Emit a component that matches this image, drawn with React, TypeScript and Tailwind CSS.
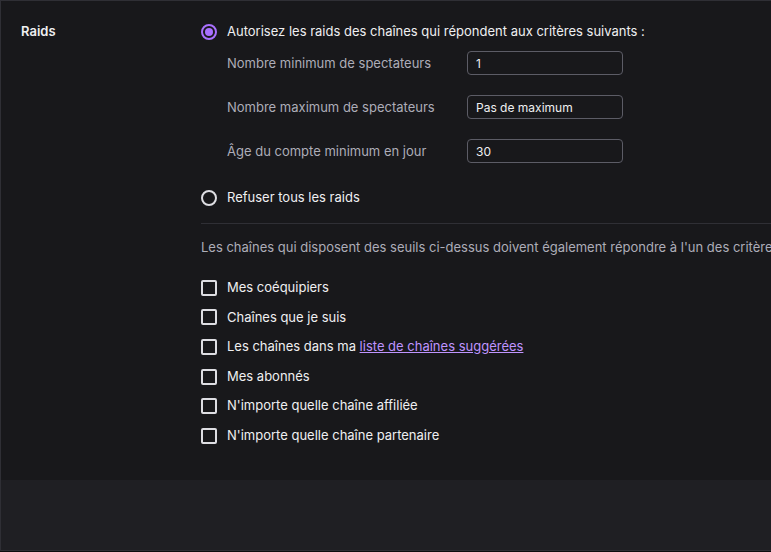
import React from "react";

const limits = [
  { label: "Nombre minimum de spectateurs", value: "1" },
  { label: "Nombre maximum de spectateurs", value: "Pas de maximum" },
  { label: "Âge du compte minimum en jour", value: "30" },
];

const Radio = ({ checked }: { checked?: boolean }) => (
  <span
    className={`flex h-4 w-4 shrink-0 items-center justify-center rounded-full border-2 ${
      checked ? "border-[#a970ff]" : "border-[#dedee3]"
    }`}
  >
    {checked && <span className="h-2 w-2 rounded-full bg-[#a970ff]" />}
  </span>
);

const Checkbox = () => (
  <span className="h-4 w-4 shrink-0 rounded-[2px] border-2 border-[#dedee3]" />
);

export default function App() {
  return (
    <div
      className="h-[552px] w-[771px] overflow-hidden bg-[#0e0e10] text-[13px] text-[#efeff1]"
      style={{ fontFamily: "Inter, 'Noto Sans', sans-serif" }}
    >
      <div className="border-b border-l border-t border-[#2f2f35] bg-[#18181b]">
        <div className="flex h-[479px] overflow-hidden">
          <div className="w-[200px] shrink-0 pl-5 pt-[22px]">
            <div className="flex h-[18px] items-center font-semibold">Raids</div>
          </div>

          <div className="min-w-0 flex-1 pt-[22px]">
            <label className="flex h-[18px] items-center gap-[10px]">
              <Radio checked />
              <span className="whitespace-nowrap">
                Autorisez les raids des chaînes qui répondent aux critères suivants :
              </span>
            </label>

            <div className="mt-[10px] flex flex-col gap-5 pl-[26px]">
              {limits.map((row) => (
                <div key={row.label} className="flex h-6 items-center">
                  <span className="w-[240px] pt-px text-[#adadb8]">{row.label}</span>
                  <input
                    readOnly
                    value={row.value}
                    className="h-6 w-[156px] rounded border border-[#5c5c66] bg-[#18181b] px-[8px] text-[12px] text-[#efeff1] outline-none"
                  />
                </div>
              ))}
            </div>

            <label className="mt-[26px] flex h-[18px] items-center gap-[10px]">
              <Radio />
              <span>Refuser tous les raids</span>
            </label>

            <div className="mt-[16px] h-px bg-[#2f2f35]" />

            <p className="mt-[15px] flex h-[18px] items-center whitespace-nowrap text-[#adadb8]">
              Les chaînes qui disposent des seuils ci-dessus doivent également répondre à l'un des critères suivants :
            </p>

            <div className="mt-4 flex flex-col">
              {[
                "Mes coéquipiers",
                "Chaînes que je suis",
                null,
                "Mes abonnés",
                "N'importe quelle chaîne affiliée",
                "N'importe quelle chaîne partenaire",
              ].map((text, i) => (
                <label key={i} className="flex h-[29.6px] items-center gap-[10px]">
                  <Checkbox />
                  {text ?? (
                    <span>
                      Les chaînes dans ma{" "}
                      <a href="#" className="text-[#bf94ff] underline">
                        liste de chaînes suggérées
                      </a>
                    </span>
                  )}
                </label>
              ))}
            </div>
          </div>
        </div>
        <div className="h-[70px] bg-[#1f1f23]" />
      </div>
    </div>
  );
}
